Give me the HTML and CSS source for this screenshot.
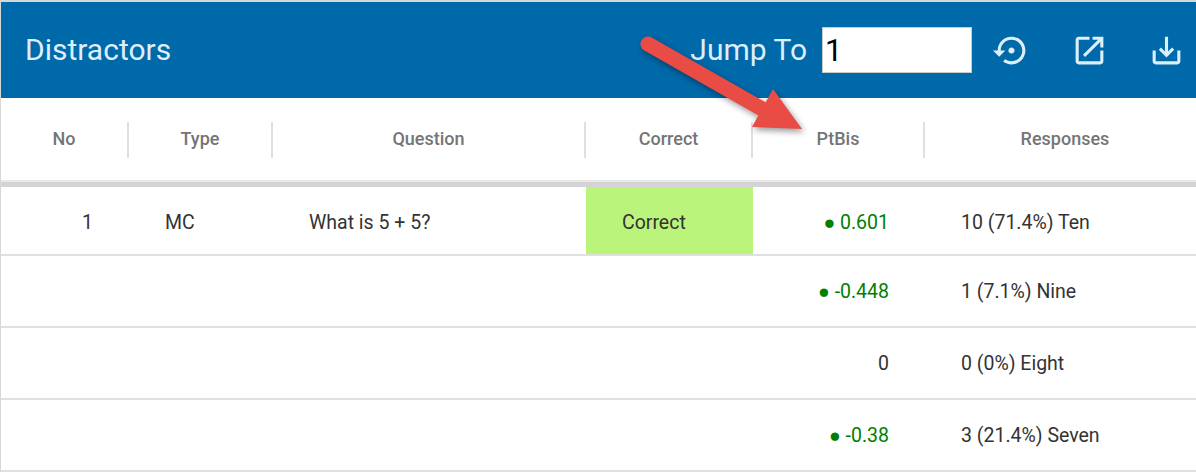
FILE: index.html
```html
<!DOCTYPE html>
<html lang="en">
<head>
  <meta charset="UTF-8">
  <meta name="viewport" content="width=device-width, initial-scale=1.0">
  <title>Distractors</title>
  <link rel="stylesheet" href="styles.css">
</head>
<body>

  <div class="panel">
    <div class="toolbar">
      <h2>Distractors</h2>
      <div class="tools">
        <label for="jump">Jump To</label>
        <input type="text" id="jump" value="1">
        <button class="icon-btn" aria-label="Reset">
          <svg viewBox="0 0 24 24"><path d="M14 12c0-1.1-.9-2-2-2s-2 .9-2 2 .9 2 2 2 2-.9 2-2zm-2-9c-4.97 0-9 4.03-9 9H0l4 4 4-4H5c0-3.87 3.13-7 7-7s7 3.13 7 7-3.13 7-7 7c-1.51 0-2.91-.49-4.06-1.3l-1.42 1.44C8.04 20.3 9.94 21 12 21c4.97 0 9-4.03 9-9s-4.03-9-9-9z"/></svg>
        </button>
        <button class="icon-btn" aria-label="Open">
          <svg viewBox="0 0 24 24"><path d="M19 19H5V5h7V3H5c-1.11 0-2 .9-2 2v14c0 1.1.89 2 2 2h14c1.1 0 2-.9 2-2v-7h-2v7zM14 3v2h3.59l-9.83 9.83 1.41 1.41L19 6.41V10h2V3h-7z"/></svg>
        </button>
        <button class="icon-btn" aria-label="Download">
          <svg viewBox="0 0 24 24"><path d="M19 12v7H5v-7H3v7c0 1.1.9 2 2 2h14c1.1 0 2-.9 2-2v-7h-2zm-6 .67l2.59-2.58L17 11.5l-5 5-5-5 1.41-1.41L11 12.67V3h2z"/></svg>
        </button>
      </div>
    </div>

    <div class="row head">
      <div class="th">No</div>
      <div class="th">Type</div>
      <div class="th">Question</div>
      <div class="th">Correct</div>
      <div class="th">PtBis</div>
      <div class="th last">Responses</div>
    </div>

    <div class="row item first">
      <div class="td num">1</div>
      <div class="td">MC</div>
      <div class="td">What is 5 + 5?</div>
      <div class="td correct">Correct</div>
      <div class="td num good">● 0.601</div>
      <div class="td">10 (71.4%) Ten</div>
    </div>
    <div class="row item">
      <div class="td"></div>
      <div class="td"></div>
      <div class="td"></div>
      <div class="td"></div>
      <div class="td num good">● -0.448</div>
      <div class="td">1 (7.1%) Nine</div>
    </div>
    <div class="row item">
      <div class="td"></div>
      <div class="td"></div>
      <div class="td"></div>
      <div class="td"></div>
      <div class="td num">0</div>
      <div class="td">0 (0%) Eight</div>
    </div>
    <div class="row item">
      <div class="td"></div>
      <div class="td"></div>
      <div class="td"></div>
      <div class="td"></div>
      <div class="td num good">● -0.38</div>
      <div class="td">3 (21.4%) Seven</div>
    </div>
  </div>

  <!-- annotation drawn over the screenshot -->
  <svg class="arrow" viewBox="0 0 1196 472">
    <path class="arrow-line" d="M648 44 L764 110"/>
    <path class="arrow-head" d="M773 89 L802 129 L752 127 Z"/>
  </svg>

</body>
</html>
```

FILE: styles.css
```css
body {
  margin: 0;
  font-family: Roboto, Arial, sans-serif;
  background: #fff;
  overflow: hidden;
}

.panel {
  border-top: 2px solid #d8d8d8;
  border-left: 1px solid #d8d8d8;
}

.toolbar {
  height: 96px;
  padding: 0 11px 0 24px;
  display: flex;
  align-items: center;
  justify-content: space-between;
  background: #0069aa;
  color: #dceffa;
}

.toolbar h2 {
  margin: 0 0 2px;
  font-size: 30px;
  font-weight: 400;
}

.tools {
  display: flex;
  align-items: center;
}

.tools label {
  font-size: 30px;
  margin: 0 15px 2px 0;
}

.tools input {
  width: 150px;
  height: 46px;
  padding: 0 2px;
  box-sizing: border-box;
  border: 1px solid #ccc;
  font-family: inherit;
  font-size: 31px;
  color: #000;
}

.icon-btn {
  width: 37px;
  height: 37px;
  padding: 0;
  margin-left: 40.5px;
  border: none;
  background: none;
  fill: #dcf0fb;
}

.icon-btn svg {
  display: block;
  width: 100%;
}

.tools input + .icon-btn {
  margin-left: 21px;
}

.row {
  display: grid;
  grid-template-columns: 128px 144px 313px 167px 172px 1fr;
}

.head {
  height: 80px;
  padding-top: 2px;
  align-items: center;
  border-bottom: 2px solid #e8e8e8;
}

.th {
  height: 36px;
  line-height: 34px;
  box-sizing: border-box;
  border-right: 2px solid #e0e0e0;
  text-align: center;
  font-size: 18px;
  font-weight: 500;
  color: #757575;
}

.th.last {
  border-right: none;
  padding-left: 9px;
}

.item {
  height: 70px;
  border-bottom: 2px solid #e0e0e0;
  font-size: 19.5px;
  color: #333;
}

.item.first {
  height: 67px;
  border-top: 5px solid #d4d4d4;
}

.first .td {
  padding-top: 3px;
}

.td {
  padding: 0 36px;
  display: flex;
  align-items: center;
  white-space: pre;
}

.num {
  justify-content: flex-end;
}

.correct {
  background: #bbf47a;
}

.good {
  color: #008000;
}

.arrow {
  position: absolute;
  left: 0;
  top: 0;
  width: 1196px;
  height: 472px;
  pointer-events: none;
  filter: drop-shadow(2px 3px 3px rgba(0,0,0,0.4));
}

.arrow-line {
  fill: none;
  stroke: #e94b45;
  stroke-width: 15;
  stroke-linecap: round;
}

.arrow-head {
  fill: #e94b45;
}
```
